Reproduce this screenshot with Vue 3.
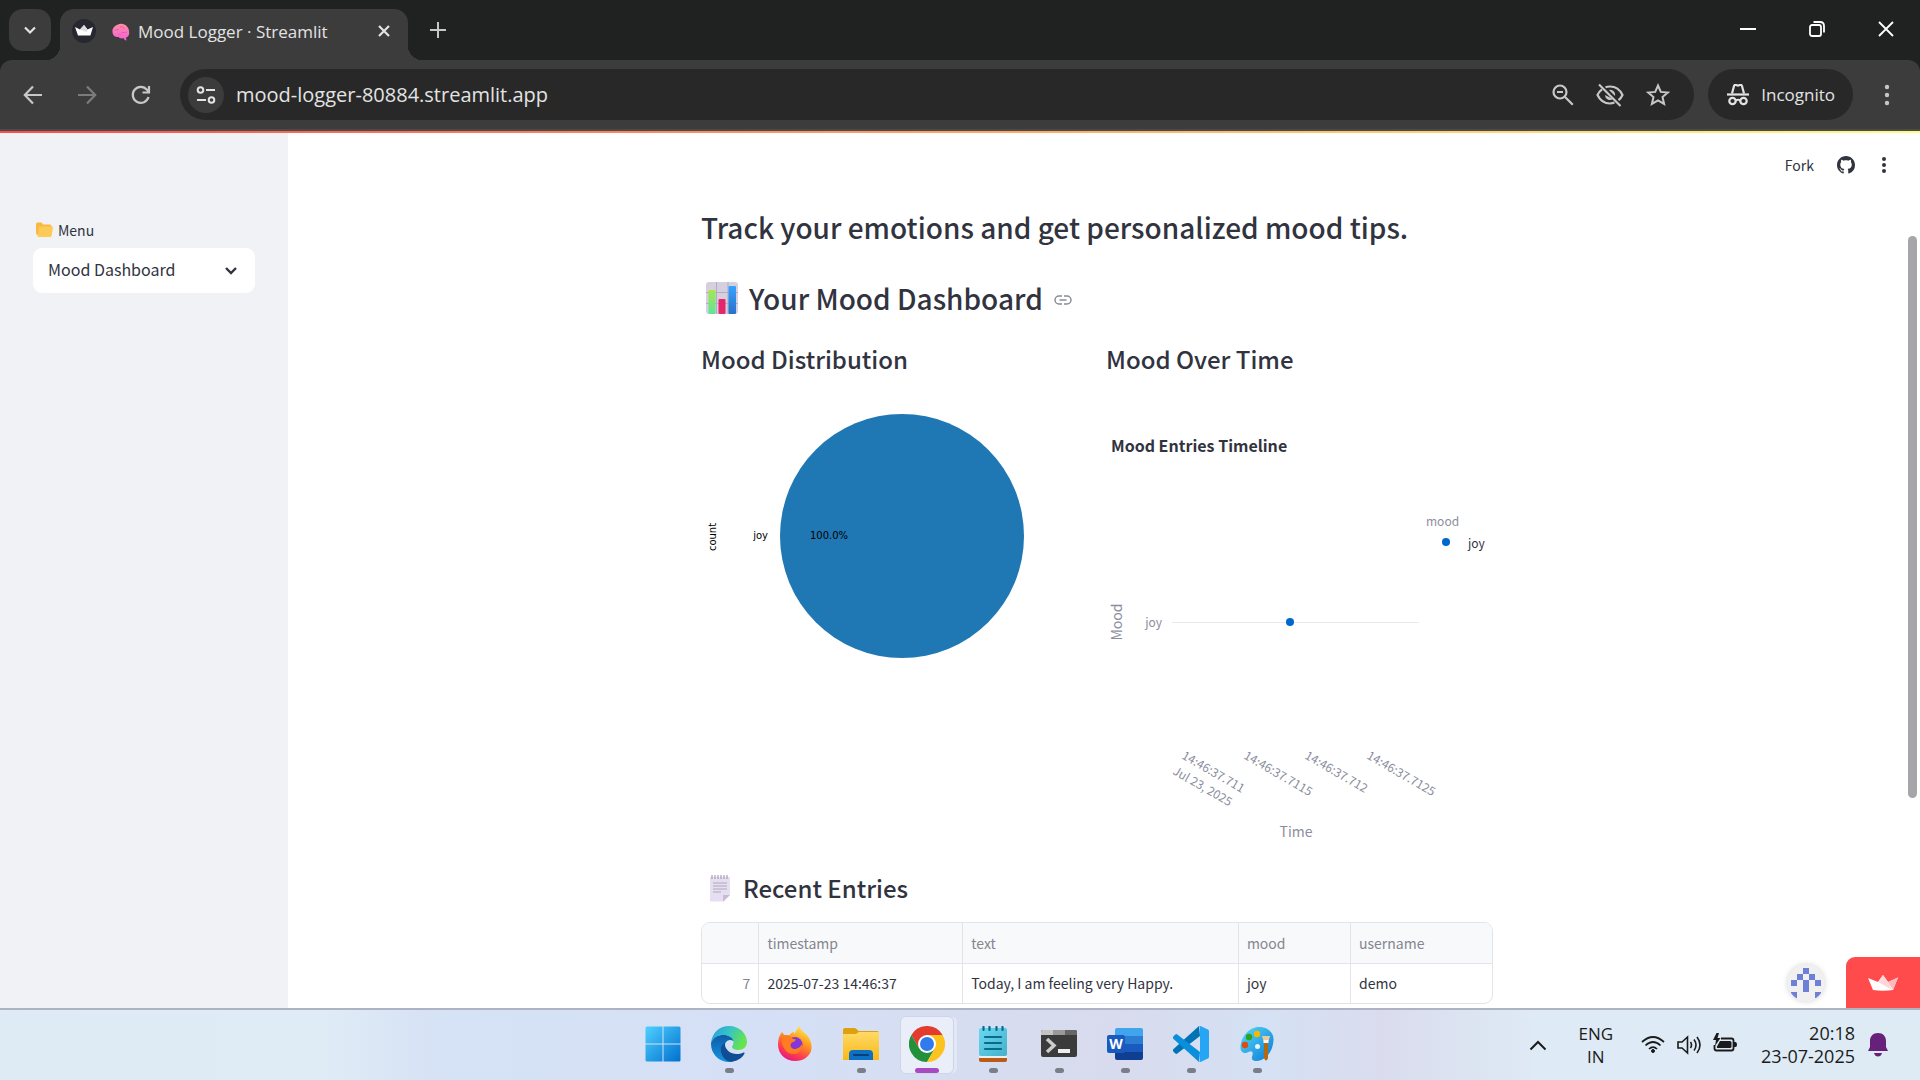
<script setup>
  import { ref } from "vue"

  const url = ref("mood-logger-80884.streamlit.app")
  const page = ref("Mood Dashboard")
  const pages = ["Mood Dashboard", "Log Mood", "Logout"]

  const columns = ["timestamp", "text", "mood", "username"]
  const entries = [
    {
      id: 7,
      timestamp: "2025-07-23 14:46:37",
      text: "Today, I am feeling very Happy.",
      mood: "joy",
      username: "demo"
    }
  ]

  const ticks = [
    { x: 75, lines: ["14:46:37.711", "Jul 23, 2025"] },
    { x: 137, lines: ["14:46:37.7115"] },
    { x: 198, lines: ["14:46:37.712"] },
    { x: 260, lines: ["14:46:37.7125"] }
  ]

  // avatar blocks on a 5x5 grid
  const blocks = [
    [2, 0], [1, 1], [3, 1], [0, 2], [2, 2], [4, 2], [2, 3], [0, 4], [4, 4]
  ]
</script>

<template>
  <div class="screen">
    <header class="tabstrip">
      <button class="tab-search" aria-label="Search tabs">
        <svg width="14" height="14" viewBox="0 0 14 14"><path d="M2 4.5l5 5 5-5" fill="none" stroke="#e3e3e3" stroke-width="2.2" /></svg>
      </button>
      <div class="tab">
        <svg width="24" height="24" viewBox="0 0 24 24">
          <circle cx="12" cy="12" r="12" fill="#262730" />
          <path d="M3 8l5 2.500L12 6l3.500 4.500L21 8l-2.600 8.500H6z" fill="#fff" />
          <path d="M12 6l3.500 4.500-1 2.500L8 10.500z" fill="#ddd" />
        </svg>
        <svg class="brain" width="18" height="18" viewBox="0 0 18 18">
          <defs>
            <linearGradient id="brain" x1="0" y1="0" x2="0" y2="1">
              <stop offset="0" stop-color="#ff8fa0" /><stop offset="1" stop-color="#f45fd8" />
            </linearGradient>
          </defs>
          <path d="M6 1.500c3-1.500 7-.5 9 2 2 2 2.600 5 2 8-.5 2-2 3-3 3l.5 3c-1.500 0-2.500-1-3-2.500-2 .8-4 .3-5-1-3 .5-6-1.500-6-5C0 5 3 2.500 6 1.500z" fill="url(#brain)" />
          <path d="M3 8c1-2 3-2 4-1M8 4c2-1 4 0 4 2M9 10c2-1 4 0 6-1M6 12c1-1 2-1 3 0" fill="none" stroke="#e858c4" stroke-width="1" />
        </svg>
        <span class="tab-title">Mood Logger · Streamlit</span>
        <button class="plain" aria-label="Close tab">
          <svg width="14" height="14" viewBox="0 0 14 14"><path d="M2 2l10 10M12 2L2 12" stroke="#e3e3e3" stroke-width="2.200" /></svg>
        </button>
      </div>
      <button class="plain new-tab" aria-label="New tab">
        <svg width="18" height="18" viewBox="0 0 18 18"><path d="M9 1v16M1 9h16" stroke="#c7c7c7" stroke-width="2" /></svg>
      </button>
      <div class="window-controls">
        <button class="plain" aria-label="Minimize"><svg width="16" height="16" viewBox="0 0 16 16"><path d="M0 8h16" stroke="#fff" stroke-width="2" /></svg></button>
        <button class="plain" aria-label="Restore">
          <svg width="16" height="16" viewBox="0 0 16 16" fill="none" stroke="#fff" stroke-width="1.800">
            <rect x="1" y="4" width="11" height="11" rx="2" /><path d="M4.500 1H11c2.500 0 4 1.500 4 4v6.500" />
          </svg>
        </button>
        <button class="plain" aria-label="Close"><svg width="16" height="16" viewBox="0 0 16 16"><path d="M1 1l14 14M15 1L1 15" stroke="#fff" stroke-width="1.800" /></svg></button>
      </div>
    </header>

    <div class="toolbar-wrap">
      <nav class="toolbar">
        <button class="plain nav" aria-label="Back"><svg width="20" height="20" viewBox="0 0 20 20"><path d="M10 1.500L1.800 10l8.200 8.500M2 10h17" fill="none" stroke="#c7c7c7" stroke-width="2.200" /></svg></button>
        <button class="plain nav" aria-label="Forward"><svg width="20" height="20" viewBox="0 0 20 20"><path d="M10 1.500l8.200 8.500-8.200 8.500M18 10H1" fill="none" stroke="#7c7c7c" stroke-width="2.200" /></svg></button>
        <button class="plain nav" aria-label="Reload"><svg width="20" height="20" viewBox="0 0 20 20"><path d="M17.500 12A8 8 0 1 1 16 4.800L18 7M18 1v6.500h-6.500" fill="none" stroke="#c7c7c7" stroke-width="2.200" /></svg></button>
        <div class="omnibox">
          <button class="site-info" aria-label="Site information">
            <svg width="20" height="20" viewBox="0 0 20 20" fill="none" stroke="#e3e3e3" stroke-width="2">
              <circle cx="4.500" cy="5" r="2.800" /><path d="M10 5h9M1 15h9" /><circle cx="15.500" cy="15" r="2.800" />
            </svg>
          </button>
          <input v-model="url" class="url" type="text" aria-label="Address" />
          <button class="plain" aria-label="Zoom">
            <svg width="22" height="22" viewBox="0 0 22 22" fill="none" stroke="#c7c7c7" stroke-width="2.200">
              <circle cx="8" cy="8" r="6.500" /><path d="M12.800 12.800l8 8M5 8h6" />
            </svg>
          </button>
          <button class="plain" aria-label="Third-party cookies blocked">
            <svg width="28" height="24" viewBox="0 0 28 24" fill="none" stroke="#c7c7c7" stroke-width="2.200">
              <path d="M9.500 4.300C11 3.700 12.500 3.500 14 3.500c5.500 0 10 3.200 12.500 8.500-.9 2-2.200 3.800-4 5.200M18.500 19.600c-1.400.6-3 .9-4.500.9-5.500 0-10-3.200-12.500-8.500C2.500 9.800 4 7.900 6 6.400" />
              <path d="M9 12a5 5 0 0 0 8 4zM13 7a5 5 0 0 1 6 6z" fill="#c7c7c7" stroke="none" />
              <path d="M3 1.500l21.500 21.500" />
            </svg>
          </button>
          <button class="plain" aria-label="Bookmark">
            <svg width="24" height="24" viewBox="0 0 24 24"><path d="M12 2.500l2.800 6.400 7 .6-5.300 4.600 1.600 6.800L12 17.300l-6.100 3.600 1.600-6.800-5.300-4.600 7-.6z" fill="none" stroke="#c7c7c7" stroke-width="2" /></svg>
          </button>
        </div>
        <button class="incognito">
          <svg width="24" height="22" viewBox="0 0 24 22">
            <path d="M6 9.500L8 2q.5-1.500 2-1l2 .6 2-.6q1.500-.5 2 1l2 7.500" fill="none" stroke="#e3e3e3" stroke-width="2.200" />
            <path d="M1 10.500h22" stroke="#e3e3e3" stroke-width="2.200" />
            <g fill="none" stroke="#e3e3e3" stroke-width="2.200"><circle cx="6.500" cy="17" r="3.200" /><circle cx="17.500" cy="17" r="3.200" /><path d="M9.500 16.500q2.500-1.500 5 0" /></g>
          </svg>
          <span>Incognito</span>
        </button>
        <button class="plain more" aria-label="Chrome menu">
          <svg width="6" height="24" viewBox="0 0 6 24" fill="#c7c7c7"><circle cx="3" cy="4" r="2.200" /><circle cx="3" cy="12" r="2.200" /><circle cx="3" cy="20" r="2.200" /></svg>
        </button>
      </nav>
    </div>

    <div class="app">
      <div class="decoration"></div>
      <aside class="sidebar">
        <label class="menu-label" for="menu">
          <svg width="17" height="16" viewBox="0 0 17 16">
            <path d="M0 2q0-1.500 1.500-1.500h4L7 2.500h7q1.500 0 1.500 1.500v9H2q-2 0-2-2z" fill="#f9b83f" />
            <path d="M4 4.500h12q1.200 0 1 1.200L15.500 14q-.2 1-1.300 1H1.500l1.300-9.300Q3 4.500 4 4.500z" fill="#fdca58" />
          </svg>
          <span>Menu</span>
        </label>
        <div class="select-wrap">
          <select id="menu" v-model="page">
            <option v-for="p in pages" :key="p">{{ p }}</option>
          </select>
          <svg class="caret" width="14" height="10" viewBox="0 0 14 10"><path d="M2 2l5 5 5-5" fill="none" stroke="#31333f" stroke-width="2.400" /></svg>
        </div>
      </aside>

      <main class="main">
        <div class="app-header">
          <a href="#" class="fork">Fork</a>
          <a href="#" aria-label="GitHub">
            <svg width="18" height="18" viewBox="0 0 16 16"><path fill="#31333f" d="M8 0C3.580 0 0 3.580 0 8c0 3.540 2.290 6.530 5.470 7.590.4.070.55-.17.55-.38 0-.19-.01-.82-.01-1.490-2.010.37-2.530-.49-2.690-.94-.09-.23-.48-.94-.82-1.130-.28-.15-.68-.52-.01-.53.63-.01 1.080.58 1.230.82.72 1.210 1.870.87 2.330.66.07-.52.28-.87.51-1.070-1.780-.2-3.640-.89-3.640-3.950 0-.87.31-1.590.82-2.150-.08-.2-.36-1.020.08-2.120 0 0 .67-.21 2.200.82.64-.18 1.320-.27 2-.27s1.360.09 2 .27c1.530-1.040 2.200-.82 2.200-.82.44 1.100.16 1.920.08 2.120.51.56.82 1.270.82 2.150 0 3.070-1.870 3.750-3.650 3.950.29.25.54.73.54 1.480 0 1.070-.01 1.930-.01 2.200 0 .21.15.46.55.38A8 8 0 0 0 16 8c0-4.420-3.580-8-8-8z" /></svg>
          </a>
          <button class="plain app-menu" aria-label="App menu">
            <svg width="12" height="18" viewBox="0 0 12 18" fill="#31333f"><circle cx="6" cy="3" r="2" /><circle cx="6" cy="9" r="2" /><circle cx="6" cy="15" r="2" /></svg>
          </button>
        </div>

        <div class="block">
          <h2>Track your emotions and get personalized mood tips.</h2>
          <h2 class="dashboard-title">
            <svg width="32" height="32" viewBox="0 0 32 32">
              <defs>
                <linearGradient id="green" x1="0" y1="0" x2="0" y2="1"><stop offset="0" stop-color="#a5e84c" /><stop offset="1" stop-color="#5fe39a" /></linearGradient>
                <linearGradient id="blue" x1="0" y1="0" x2="0" y2="1"><stop offset="0" stop-color="#35a3ff" /><stop offset="1" stop-color="#2b6fc8" /></linearGradient>
              </defs>
              <rect width="32" height="32" rx="3" fill="#d5cfdf" />
              <path d="M10.500 0v32M22 0v32M0 10.500h32M0 21.500h32" stroke="#b3abc0" />
              <rect x="2.500" y="8" width="7" height="24" rx="1" fill="url(#green)" />
              <rect x="12.500" y="17" width="7" height="15" rx="1" fill="#e4266d" />
              <rect x="22.500" y="4" width="7.500" height="28" rx="1" fill="url(#blue)" />
            </svg>
            <span>Your Mood Dashboard</span>
            <a href="#your-mood-dashboard" class="anchor" aria-label="Link to heading">
              <svg width="18" height="10" viewBox="0 0 18 10"><path d="M8 1H5a4 4 0 0 0 0 8h3M10 1h3a4 4 0 0 1 0 8h-3M5.500 5h7" fill="none" stroke="#8b8d97" stroke-width="1.500" /></svg>
            </a>
          </h2>

          <div class="charts">
            <section>
              <h3>Mood Distribution</h3>
              <svg class="chart" viewBox="0 0 387 456">
                <circle cx="201" cy="146" r="122" fill="#1f77b4" />
                <g class="mpl">
                  <text x="67" y="149" text-anchor="end">joy</text>
                  <text x="128" y="149" text-anchor="middle">100.0%</text>
                  <text transform="translate(15 147) rotate(-90)" text-anchor="middle">count</text>
                </g>
              </svg>
            </section>
            <section>
              <h3>Mood Over Time</h3>
              <svg class="chart" viewBox="0 0 387 456">
                <text x="5" y="62" class="chart-title">Mood Entries Timeline</text>
                <text x="320" y="136" class="tick">mood</text>
                <circle cx="340" cy="152" r="4" fill="#0068c9" />
                <text x="362" y="158" class="tick dark">joy</text>
                <path d="M66 232.500h247" stroke="#e6eaf1" />
                <text x="56" y="237" class="tick" text-anchor="end">joy</text>
                <circle cx="184" cy="232" r="4" fill="#0068c9" />
                <text transform="translate(16 232) rotate(-90)" class="axis" text-anchor="middle">Mood</text>
                <g v-for="tick in ticks" :key="tick.x" :transform="`translate(${tick.x} 368) rotate(30)`" class="tick">
                  <text v-for="(line, i) in tick.lines" :key="line" x="0" :y="i * 18">{{ line }}</text>
                </g>
                <text x="190" y="447" class="axis" text-anchor="middle">Time</text>
              </svg>
            </section>
          </div>

          <h3 class="entries-title">
            <svg width="20" height="28" viewBox="0 0 20 28">
              <path d="M0 3h20v18l-6 6.500H0z" fill="#e6dff1" />
              <path d="M13 27.500V21h7z" fill="#c9b9da" />
              <path d="M2 1v4M5 1v4M8 1v4M11 1v4M14 1v4M17 1v4" stroke="#a79db5" stroke-width="1.200" />
              <path d="M3 9h14M3 12h14M3 15h14M3 18h8" stroke="#b1a8bd" stroke-width="1.200" />
            </svg>
            <span>Recent Entries</span>
          </h3>
          <div class="table-wrap">
            <table>
              <colgroup>
                <col class="c-index" /><col class="c-time" /><col class="c-text" /><col class="c-mood" /><col />
              </colgroup>
              <thead>
                <tr>
                  <th aria-label="index"></th>
                  <th v-for="c in columns" :key="c">{{ c }}</th>
                </tr>
              </thead>
              <tbody>
                <tr v-for="e in entries" :key="e.id">
                  <td class="index">{{ e.id }}</td>
                  <td v-for="c in columns" :key="c">{{ e[c] }}</td>
                </tr>
              </tbody>
            </table>
          </div>
        </div>
      </main>
      <div class="scrollbar"><div class="thumb"></div></div>

      <div class="badges">
        <a href="#" class="avatar" aria-label="Creator profile">
          <svg width="36" height="36" viewBox="0 0 36 36">
            <defs><clipPath id="round"><circle cx="18" cy="18" r="18" /></clipPath></defs>
            <circle cx="18" cy="18" r="18" fill="#f0f0f0" />
            <g clip-path="url(#round)" fill="#6e7fd8">
              <rect v-for="[x, y] in blocks" :key="x + '-' + y" :x="3 + x * 6" :y="3 + y * 6" width="6" height="6" />
            </g>
          </svg>
        </a>
        <a href="#" class="hosted" aria-label="Hosted with Streamlit">
          <svg width="30" height="16" viewBox="0 0 30 16">
            <path d="M0 3l10 4 5-7 5 7 10-4.500L25 15q-10 1.500-20 0z" fill="#fff" />
            <path d="M15 0l5 7 4 8-14-8z" fill="#ffd7da" />
            <path d="M30 2.500L25 15l-5-8z" fill="#ffb9bd" />
          </svg>
        </a>
      </div>
    </div>

    <footer class="taskbar">
      <div class="side"></div>
      <div class="apps">
        <button class="app-icon" aria-label="Start">
          <svg width="36" height="36" viewBox="0 0 36 36">
            <defs><linearGradient id="win" x1="0" y1="0" x2="1" y2="1"><stop offset="0" stop-color="#4fd0ff" /><stop offset="1" stop-color="#0070cf" /></linearGradient></defs>
            <path d="M2 .5h15.500v17H.500V2Q.500.500 2 .5zM18.500.500H34q1.500 0 1.500 1.500v15.500h-17zM.500 18.500H17.500v17H2q-1.500 0-1.500-1.500zM18.500 18.500h17V34q0 1.500-1.500 1.500H18.500z" fill="url(#win)" />
          </svg>
        </button>
        <button class="app-icon running" aria-label="Edge">
          <svg width="36" height="36" viewBox="0 0 36 36">
            <defs>
              <linearGradient id="edge1" x1="0" y1="0" x2="1" y2=".4"><stop offset="0" stop-color="#249be0" /><stop offset=".5" stop-color="#35c3c8" /><stop offset="1" stop-color="#66e350" /></linearGradient>
              <linearGradient id="edge2" x1="0" y1="0" x2="0" y2="1"><stop offset="0" stop-color="#0d5ca8" /><stop offset="1" stop-color="#1594e0" /></linearGradient>
            </defs>
            <path d="M0 17C1 7 8 0 18 0c11 0 18 8 18 16 0 5-4 8-8.500 8-4 0-6.500-1.500-6.500-3 0-1 1.500-2 1.500-4.500C22.500 12 18 9 12.500 9 6 9 2 12.500 0 17z" fill="url(#edge1)" />
            <path d="M0 17C2 11.500 7 9 12.500 9c5 0 9 2.500 10 6-5-3-9 1-9 6 0 7 5 12.500 9 14.500-2 .5-3 .5-4.500.5C8 36 0 28 0 18z" fill="url(#edge2)" />
            <path d="M14 17c-3.500 1.500-4.500 5-4 8.500C11 31 15.500 36 20.500 35.800 27 35 32 31 33.500 27.500q.4-1.500-1-1C23 31 14.500 25 14 19z" fill="#114d92" />
          </svg>
        </button>
        <button class="app-icon" aria-label="Firefox">
          <svg width="36" height="36" viewBox="0 0 36 36">
            <defs><linearGradient id="fox" x1=".8" y1="0" x2=".3" y2="1"><stop offset="0" stop-color="#fff44f" /><stop offset=".4" stop-color="#ff9a1f" /><stop offset=".75" stop-color="#ff3d4d" /><stop offset="1" stop-color="#e31587" /></linearGradient></defs>
            <path d="M5 6l3 4c1.500-.8 3-1 4.500-1C14 7 15.500 6 17 6q0 1 .5 2C19 5 20.500 2 22.500 0c1 4 4 5.500 6 8l1.500 1c4 5 5.500 11 4 16-2 6-8 10-15.500 10C8 35 1 27.500 1 18.500 1 13 2.500 9 5 6z" fill="url(#fox)" />
            <circle cx="18" cy="18.500" r="7.500" fill="#8436db" />
            <path d="M5 10c4-2 8-.5 10 2.500l4 1c-1 2.500-4 2.500-5 4-1.500 3 1 6 4.500 5.500 3-.5 5.500-2.500 6.500-5 1 7-4 10.500-9.500 10C9 27.500 4 21 5 10z" fill="#ff7c20" />
          </svg>
        </button>
        <button class="app-icon running" aria-label="File Explorer">
          <svg width="36" height="36" viewBox="0 0 36 36">
            <defs><linearGradient id="folder" x1="0" y1="0" x2="0" y2="1"><stop offset="0" stop-color="#ffd968" /><stop offset="1" stop-color="#f8b916" /></linearGradient></defs>
            <path d="M0 4q0-2 2-2h9q1.500 0 2.500 1l2 2H34q2 0 2 2v7H0z" fill="#dea00f" />
            <path d="M0 8h12q1.500 0 3-1.500L16 6h20v28H0z" fill="url(#folder)" />
            <path d="M6 34v-6q0-4 4-4h16q4 0 4 4v6z" fill="#0c70c4" /><path d="M11 29h14" stroke="#0a3e78" stroke-width="2" stroke-linecap="round" />
          </svg>
        </button>
        <button class="app-icon running active" aria-label="Chrome">
          <svg width="36" height="36" viewBox="0 0 36 36">
            <path d="M18 9h15.600A18 18 0 0 0 2.400 9l7.800 13.500z" fill="#e33b2e" />
            <path d="M10.200 22.500L2.400 9A18 18 0 0 0 18 36l7.800-13.500z" fill="#23903c" />
            <path d="M25.800 22.500L18 36A18 18 0 0 0 33.600 9H18z" fill="#fcc31e" />
            <circle cx="18" cy="18" r="9" fill="#fff" /><circle cx="18" cy="18" r="7" fill="#2f7bee" />
          </svg>
        </button>
        <button class="app-icon running" aria-label="Notepad">
          <svg width="36" height="36" viewBox="0 0 36 36">
            <defs><linearGradient id="note" x1="0" y1="0" x2="1" y2="1"><stop offset="0" stop-color="#6bd8f2" /><stop offset="1" stop-color="#45b0ca" /></linearGradient></defs>
            <path d="M4 30h28v4q0 2-2 2H6q-2 0-2-2z" fill="#b95a17" /><path d="M4 30h28v2H4z" fill="#eee" />
            <path d="M4 4q0-2 2-2h24q2 0 2 2v24q0 2-2 2H6q-2 0-2-2z" fill="url(#note)" />
            <path d="M8.500 1v3M14.500 1v3M21.500 1v3M27.500 1v3M10 11h16M10 17h16M10 23h16" stroke="#056c8c" stroke-width="2.200" stroke-linecap="round" />
          </svg>
        </button>
        <button class="app-icon running" aria-label="Terminal">
          <svg width="36" height="36" viewBox="0 0 36 36">
            <rect y="4" width="36" height="27" rx="2" fill="#3b3b3b" /><path d="M2 4h10v5H0V6q0-2 2-2z" fill="#c4c4c4" /><path d="M12 4h12v5H12z" fill="#999" /><path d="M24 4h10q2 0 2 2v3H24z" fill="#666" />
            <path d="M6 13l7 6.500L6 26" fill="none" stroke="#ccc" stroke-width="3.500" /><path d="M17 25h12" stroke="#eee" stroke-width="4" />
          </svg>
        </button>
        <button class="app-icon running" aria-label="Word">
          <svg width="36" height="36" viewBox="0 0 36 36">
            <path d="M8 10V4q0-2 2-2h24q2 0 2 2v6z" fill="#41a5ee" /><path d="M8 10h28v8H8z" fill="#2b7cd3" /><path d="M8 18h28v8H8z" fill="#185abd" /><path d="M8 26h28v6q0 2-2 2H10q-2 0-2-2z" fill="#103f91" />
            <rect y="9" width="18" height="18" rx="2" fill="#185abd" />
            <text x="9" y="23" class="word" text-anchor="middle">W</text>
          </svg>
        </button>
        <button class="app-icon running" aria-label="VS Code">
          <svg width="36" height="36" viewBox="0 0 36 36">
            <path d="M26 0L0 23.500q-.6 1 .3 2l2 2q1 .8 2 0L27 10z" fill="#0073b7" />
            <path d="M26 36L0 12.500q-.6-1 .3-2l2-2q1-.8 2 0L27 26z" fill="#0a8fdd" />
            <path d="M26 0q1-.2 2 .2l7 3.400q1 .6 1 1.600v25.600q0 1-1 1.600l-7 3.400q-1 .4-2 .2 1-.6 1-2V2q0-1.400-1-2z" fill="#27a5f5" />
          </svg>
        </button>
        <button class="app-icon running" aria-label="Paint">
          <svg width="36" height="36" viewBox="0 0 36 36">
            <defs><linearGradient id="paint" x1="0" y1="0" x2="1" y2="1"><stop offset="0" stop-color="#55dcfa" /><stop offset="1" stop-color="#0b78d4" /></linearGradient></defs>
            <path d="M20 1c9 0 15 6 14.500 13C34 25 27 35 17 35c-5 0-4.500-3-3.500-6s-1-5-4-3-8 1-8-4C1.500 11 10 1 20 1z" fill="url(#paint)" />
            <circle cx="18" cy="8" r="3.200" fill="#f8b800" /><circle cx="10" cy="11" r="3.200" fill="#2ea31d" /><circle cx="6" cy="19" r="3.200" fill="#de4c12" /><circle cx="18.500" cy="20.500" r="2.500" fill="#e8f5fc" />
            <path d="M25 16h4v16q-2 5-4 0z" fill="#b5680e" /><path d="M23 10h8l-1.500 5h-5z" fill="#ecc99b" /><path d="M24.500 14h5v3h-5z" fill="#f4f4f4" />
          </svg>
        </button>
      </div>
      <div class="side tray">
        <button class="plain" aria-label="Hidden icons"><svg width="18" height="12" viewBox="0 0 18 12"><path d="M1.500 10.500L9 3l7.500 7.500" fill="none" stroke="#1b1b1b" stroke-width="2" /></svg></button>
        <button class="plain lang">ENG<br />IN</button>
        <button class="plain status" aria-label="Network, volume and battery">
          <svg width="24" height="24" viewBox="0 0 24 24" fill="none" stroke="#1b1b1b" stroke-width="1.700">
            <path d="M1 9q11-10 22 0M4.500 12.500q7.500-7 15 0M8 16q4-4 8 0" /><circle cx="12" cy="18" r="1.500" fill="#1b1b1b" stroke-width="1" />
          </svg>
          <svg width="24" height="24" viewBox="0 0 24 24" fill="none" stroke="#1b1b1b" stroke-width="1.600">
            <path d="M1 9h4l5.500-5v16L5 15H1zM13.500 9q2 3 0 6M17 6.500q4 5.500 0 11M20 4q6 8 0 16" />
          </svg>
          <svg width="24" height="24" viewBox="0 0 24 24">
            <path d="M8 5.500h10.500q2 0 2 2v8q0 2-2 2h-15q-2 0-2-2V12" fill="none" stroke="#1b1b1b" stroke-width="1.800" /><path d="M7 8h10q1.500 0 1.500 1.500v4q0 1.500-1.500 1.500H4.500Q3.500 15 4 13.500z" fill="#1b1b1b" /><path d="M21 9h1.500q1.500 0 1.500 2.500t-1.500 2.500H21zM3.500 0L0 7h3l-1 6 5.500-8H4.500L6 0z" fill="#1b1b1b" />
          </svg>
        </button>
        <button class="plain clock">20:18<br />23-07-2025</button>
        <button class="plain bell" aria-label="Notifications">
          <svg width="20" height="24" viewBox="0 0 20 24" fill="#67217a"><path d="M10 0c5 0 8 3.500 8 8v6l2 4H0l2-4V8c0-4.500 3-8 8-8zM6 20h8q-1 3.500-4 3.500T6 20z" /></svg>
        </button>
      </div>
    </footer>
  </div>
</template>

<style>
  body {
    background: #fff;
  }
</style>

<style scoped>
  .screen {
    --source: "Noto Sans CJK JP", "Noto Sans", sans-serif;
    --segoe: "Open Sans", "Noto Sans", sans-serif;
    --ink: #31333f;
    display: flex;
    flex-direction: column;
    height: 100vh;
    font-family: var(--segoe);
    overflow: hidden;
  }

  * {
    box-sizing: border-box;
  }

  svg {
    display: block;
    flex: none;
  }

  a {
    color: inherit;
    text-decoration: none;
  }

  button {
    font-family: inherit;
    border: 0;
    padding: 0;
  }

  .plain {
    background: none;
    color: inherit;
  }

  .tabstrip {
    display: flex;
    height: 60px;
    flex: none;
    background: #202221;
    padding: 9px 26px 0 9px;
  }

  .tab-search {
    display: grid;
    place-items: center;
    width: 42px;
    height: 42px;
    border-radius: 14px;
    background: #3c3c3c;
  }

  .tab {
    position: relative;
    display: flex;
    align-items: center;
    width: 348px;
    height: 51px;
    margin-left: 9px;
    padding: 0 17px 8px 12px;
    border-radius: 14px 14px 0 0;
    background: #3c3c3c;
    color: #e3e3e3;
  }

  /* flared feet of the active tab */
  .tab::before,
  .tab::after {
    content: "";
    position: absolute;
    bottom: 0;
    width: 14px;
    height: 14px;
  }

  .tab::before {
    right: 100%;
    background: radial-gradient(circle at 0 0, transparent 14px, #3c3c3c 14px);
  }

  .tab::after {
    left: 100%;
    background: radial-gradient(circle at 100% 0, transparent 14px, #3c3c3c 14px);
  }

  .brain {
    margin: 2px 8px 0 16px;
  }

  .tab-title {
    flex: 1;
    font-size: 17px;
    line-height: 24px;
    padding-top: 2px;
    white-space: nowrap;
  }

  .new-tab {
    align-self: flex-start;
    margin: 12px 0 0 21px;
  }

  .window-controls {
    display: flex;
    gap: 53px;
    margin: 12px 0 0 auto;
    align-self: flex-start;
  }

  .toolbar-wrap {
    flex: none;
    background: #202221;
  }

  .toolbar {
    display: flex;
    align-items: center;
    height: 71px;
    padding: 0 30px 0 23px;
    border-radius: 12px 12px 0 0;
    border-bottom: 2px solid #4a4a4a;
    background: #3c3c3c;
  }

  .nav {
    margin-right: 34px;
  }

  .omnibox {
    display: flex;
    flex: 1;
    align-items: center;
    gap: 22px;
    height: 51px;
    margin-right: 14px;
    margin-left: -5px;
    padding: 0 24px 0 8px;
    border-radius: 26px;
    background: #282828;
  }

  .site-info {
    display: grid;
    place-items: center;
    width: 36px;
    height: 36px;
    border-radius: 50%;
    background: #3c3c3c;
  }

  .url {
    flex: 1;
    min-width: 0;
    margin-left: -10px;
    padding: 0;
    border: 0;
    background: none;
    color: #e3e3e3;
    font-family: inherit;
    font-size: 20px;
  }

  .incognito {
    display: flex;
    align-items: center;
    gap: 11px;
    height: 51px;
    padding: 0 18px;
    border-radius: 26px;
    background: #282828;
    color: #e3e3e3;
    font-size: 17px;
  }

  .more {
    margin-left: 31px;
  }

  .app {
    position: relative;
    display: flex;
    flex: 1;
    min-height: 0;
    background: #fff;
    color: var(--ink);
    font-family: var(--source);
  }

  .decoration {
    position: absolute;
    inset: 0 0 auto;
    height: 2px;
    background: linear-gradient(90deg, #ff4b4b, #fffd80);
  }

  .sidebar {
    width: 288px;
    flex: none;
    padding: 87px 33px 0;
    background: #f0f2f6;
  }

  .menu-label {
    display: flex;
    align-items: center;
    gap: 5px;
    padding-left: 3px;
    font-size: 14px;
    line-height: 24px;
  }

  .select-wrap {
    position: relative;
    margin-top: 6px;
  }

  select {
    appearance: none;
    width: 100%;
    height: 45px;
    padding: 0 36px 3px 15px;
    border: 0;
    border-radius: 9px;
    background: #fff;
    color: var(--ink);
    font-family: inherit;
    font-size: 16px;
  }

  .caret {
    position: absolute;
    right: 17px;
    top: 18px;
    pointer-events: none;
  }

  .main {
    flex: 1;
    min-width: 0;
    overflow: hidden;
  }

  .app-header {
    display: flex;
    align-items: center;
    justify-content: flex-end;
    gap: 23px;
    height: 68px;
    padding-right: 16px;
  }

  .fork {
    font-size: 14px;
    line-height: 24px;
  }

  .block {
    max-width: 792px;
    margin: 0 auto;
    padding-top: 9px;
  }

  h2,
  h3 {
    margin: 0;
    font-weight: 500;
  }

  h2 {
    font-size: 28px;
    line-height: 38px;
  }

  h3 {
    font-size: 24px;
    line-height: 34px;
  }

  .dashboard-title {
    display: flex;
    align-items: center;
    gap: 11px;
    margin-top: 33px;
    padding-left: 5px;
  }

  .anchor {
    padding-top: 4px;
  }

  .charts {
    display: grid;
    grid-template-columns: 1fr 1fr;
    gap: 18px;
    margin-top: 25px;
  }

  .chart {
    width: 100%;
    margin-top: 14px;
  }

  .mpl {
    font-family: "DejaVu Sans", sans-serif;
    font-size: 10px;
    fill: #000;
  }

  .chart-title {
    font-size: 16px;
    font-weight: 700;
    fill: var(--ink);
  }

  .tick {
    font-size: 12px;
    fill: #8b8e9e;
  }

  .tick.dark {
    fill: var(--ink);
  }

  .axis {
    font-size: 14px;
    fill: #8b8e9e;
  }

  .entries-title {
    display: flex;
    align-items: center;
    gap: 13px;
    margin-top: 25px;
    padding-left: 9px;
  }

  .table-wrap {
    margin-top: 17px;
    border: 1px solid #e3e4e8;
    border-radius: 9px;
    overflow: hidden;
  }

  table {
    width: 100%;
    table-layout: fixed;
    border-collapse: collapse;
    font-size: 14px;
    line-height: 20px;
  }

  th,
  td {
    height: 40px;
    padding: 0 8px;
    border-left: 1px solid #e3e4e8;
    text-align: left;
    font-weight: 400;
    white-space: nowrap;
  }

  th {
    background: #f8f9fb;
    border-bottom: 1px solid #e3e4e8;
    color: #84868f;
  }

  th:first-child,
  td:first-child {
    border-left: 0;
  }

  td.index {
    text-align: right;
    color: #84868f;
  }

  .c-index {
    width: 7.2%;
  }

  .c-time {
    width: 25.8%;
  }

  .c-text {
    width: 34.9%;
  }

  .c-mood {
    width: 14.2%;
  }

  .badges {
    position: absolute;
    right: 0;
    bottom: 0;
    display: flex;
    align-items: center;
    gap: 22px;
  }

  .avatar {
    border-radius: 50%;
    box-shadow: 0 0 6px rgba(0, 0, 0, 0.2);
  }

  .hosted {
    display: grid;
    place-items: center;
    width: 74px;
    height: 51px;
    border-radius: 9px 0 0 0;
    background: #ff4b4b;
  }

  .scrollbar {
    display: flex;
    flex-direction: column;
    width: 14px;
    padding: 0 3px 0 2px;
  }

  .scrollbar::before {
    content: "";
    flex: 12;
  }

  .scrollbar::after {
    content: "";
    flex: 24;
  }

  .thumb {
    flex: 64;
    border-radius: 5px;
    background: #a6a6aa;
  }

  .taskbar {
    display: flex;
    align-items: center;
    height: 72px;
    flex: none;
    border-top: 2px solid #adb3c2;
    background: linear-gradient(90deg, #deebf4, #e0ecf5 16%, #d6e2f5 23%, #d5e0f6 40%, #d8dbed 58%, #d5e1f4 66%, #dadcee 72%, #deeaf5 80%, #deebf5);
    color: #1b1b1b;
  }

  .side {
    flex: 1;
  }

  .apps {
    display: flex;
    gap: 12px;
  }

  .app-icon {
    position: relative;
    display: grid;
    place-items: center;
    width: 54px;
    height: 58px;
    padding-bottom: 2px;
    border: 1px solid transparent;
    border-radius: 6px;
    background: none;
  }

  .app-icon.active {
    border-color: #cfd4e6;
    background: #eaeef9;
    box-shadow: 4px 0 0 -1px #e3e8f6;
  }

  .app-icon.running::after {
    content: "";
    position: absolute;
    bottom: 0;
    left: calc(50% - 4px);
    width: 9px;
    height: 5px;
    border-radius: 3px;
    background: #7a7e89;
  }

  .app-icon.active::after {
    left: calc(50% - 12px);
    width: 24px;
    background: #a84bc2;
  }

  .word {
    font-family: var(--segoe);
    font-size: 14px;
    font-weight: 700;
    fill: #fff;
  }

  .tray {
    display: flex;
    align-items: center;
    justify-content: flex-end;
  }

  .lang,
  .clock {
    line-height: 23px;
  }

  .lang {
    margin: 0 28px 0 31px;
    font-size: 17px;
  }

  .status {
    display: flex;
    gap: 12px;
  }

  .clock {
    margin: 0 13px 0 24px;
    font-size: 18px;
    text-align: right;
  }

  .bell {
    margin-right: 32px;
  }
</style>
